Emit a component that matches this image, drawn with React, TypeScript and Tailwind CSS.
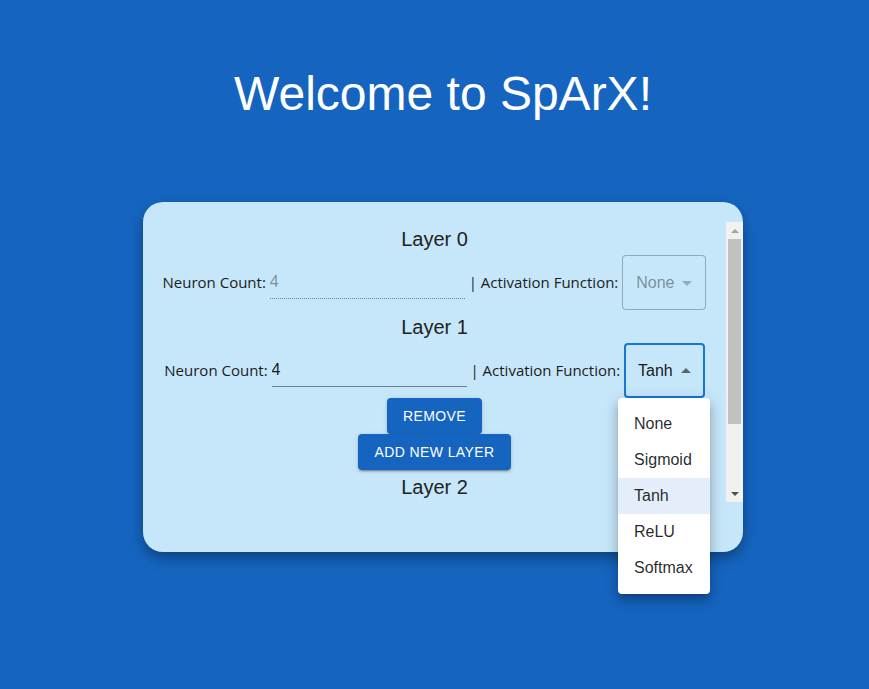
import React from 'react';

const OPTIONS = ['None', 'Sigmoid', 'Tanh', 'ReLU', 'Softmax'];

function Arrow({ up, disabled }: { up?: boolean; disabled?: boolean }) {
  return (
    <svg
      viewBox="0 0 24 24"
      className={`absolute right-[7px] top-1/2 h-6 w-6 -translate-y-1/2 ${up ? 'rotate-180' : ''} ${
        disabled ? 'fill-black/25' : 'fill-black/55'
      }`}
    >
      <path d="M7 10l5 5 5-5z" />
    </svg>
  );
}

function LayerRow({ disabled, value }: { disabled?: boolean; value: string }) {
  return (
    <div className="flex h-[55px] items-center justify-center">
      <span className="font-['Open_Sans'] text-[15px] text-[#1c1c1c]">Neuron Count:&nbsp;</span>
      <input
        readOnly
        disabled={disabled}
        value="4"
        className={`h-[32px] w-[195px] bg-transparent pt-1 pb-[5px] text-[16px] outline-none ${
          disabled
            ? 'border-b border-dotted border-[#6d8593] text-black/40'
            : 'border-b border-[#6d8593] text-black/90'
        }`}
      />
      <span className="font-['Open_Sans'] text-[15px] text-[#1c1c1c]">&nbsp;|&nbsp;Activation Function:&nbsp;</span>
      <div
        className={`relative flex h-[55px] items-center rounded pl-[14px] pr-[32px] text-[16px] ${
          disabled
            ? 'text-black/40 shadow-[inset_0_0_0_1px_rgba(0,0,0,0.26)]'
            : 'text-black/90 shadow-[inset_0_0_0_2px_#1976d2]'
        }`}
      >
        {value}
        <Arrow up={!disabled} disabled={disabled} />
      </div>
    </div>
  );
}

function Heading({ n }: { n: number }) {
  return <div className="flex h-[33px] items-center justify-center text-[20px] text-[#222]">Layer {n}</div>;
}

function Scrollbar() {
  return (
    <div className="flex w-[17px] shrink-0 flex-col bg-[#f1f1f1]">
      <div className="flex h-[17px] items-center justify-center">
        <svg viewBox="0 0 8 4" className="h-1 w-2 fill-[#a3a3a3]">
          <path d="M0 4L4 0L8 4z" />
        </svg>
      </div>
      <div className="flex-1">
        <div className="mx-[2px] h-[185px] bg-[#c1c1c1]" />
      </div>
      <div className="flex h-[17px] items-center justify-center">
        <svg viewBox="0 0 8 4" className="h-1 w-2 fill-[#505050]">
          <path d="M0 0L4 4L8 0z" />
        </svg>
      </div>
    </div>
  );
}

export default function App() {
  return (
    <div className="min-h-screen bg-[#1565c0] pl-[17px] font-['Liberation_Sans',Arial,sans-serif]">
      <h1 className="pt-[66px] text-center text-[48px] leading-[55px] text-white">Welcome to SpArX!</h1>
      <div className="relative mx-auto mt-[81px] h-[350px] w-[600px] rounded-[20px] bg-[#c6e6f9] pt-[20px] shadow-[0_6px_14px_rgba(0,0,0,0.35)]">
        <div className="flex h-[280px]">
          <div className="flex-1 overflow-hidden">
            <Heading n={0} />
            <LayerRow disabled value="None" />
            <Heading n={1} />
            <LayerRow value="Tanh" />
            <div className="flex flex-col items-center">
              <button className="h-9 rounded bg-[#1565c0] px-4 text-[14px] tracking-[0.4px] text-white uppercase shadow-[0_3px_1px_-2px_rgba(0,0,0,0.2),0_2px_2px_rgba(0,0,0,0.14),0_1px_5px_rgba(0,0,0,0.12)]">
                Remove
              </button>
              <button className="h-9 rounded bg-[#1565c0] px-4 text-[14px] tracking-[0.4px] text-white uppercase shadow-[0_3px_1px_-2px_rgba(0,0,0,0.2),0_2px_2px_rgba(0,0,0,0.14),0_1px_5px_rgba(0,0,0,0.12)]">
                Add new layer
              </button>
            </div>
            <Heading n={2} />
          </div>
          <Scrollbar />
        </div>
        <ul className="absolute left-[475px] top-[196px] w-[92px] rounded bg-white py-2 shadow-[0_5px_5px_-3px_rgba(0,0,0,0.2),0_8px_10px_1px_rgba(0,0,0,0.14),0_3px_14px_2px_rgba(0,0,0,0.12)]">
          {OPTIONS.map((o) => (
            <li
              key={o}
              className={`flex h-9 items-center px-4 text-[16px] text-black/85 ${o === 'Tanh' ? 'bg-[#e3eefa]' : ''}`}
            >
              {o}
            </li>
          ))}
        </ul>
      </div>
    </div>
  );
}
